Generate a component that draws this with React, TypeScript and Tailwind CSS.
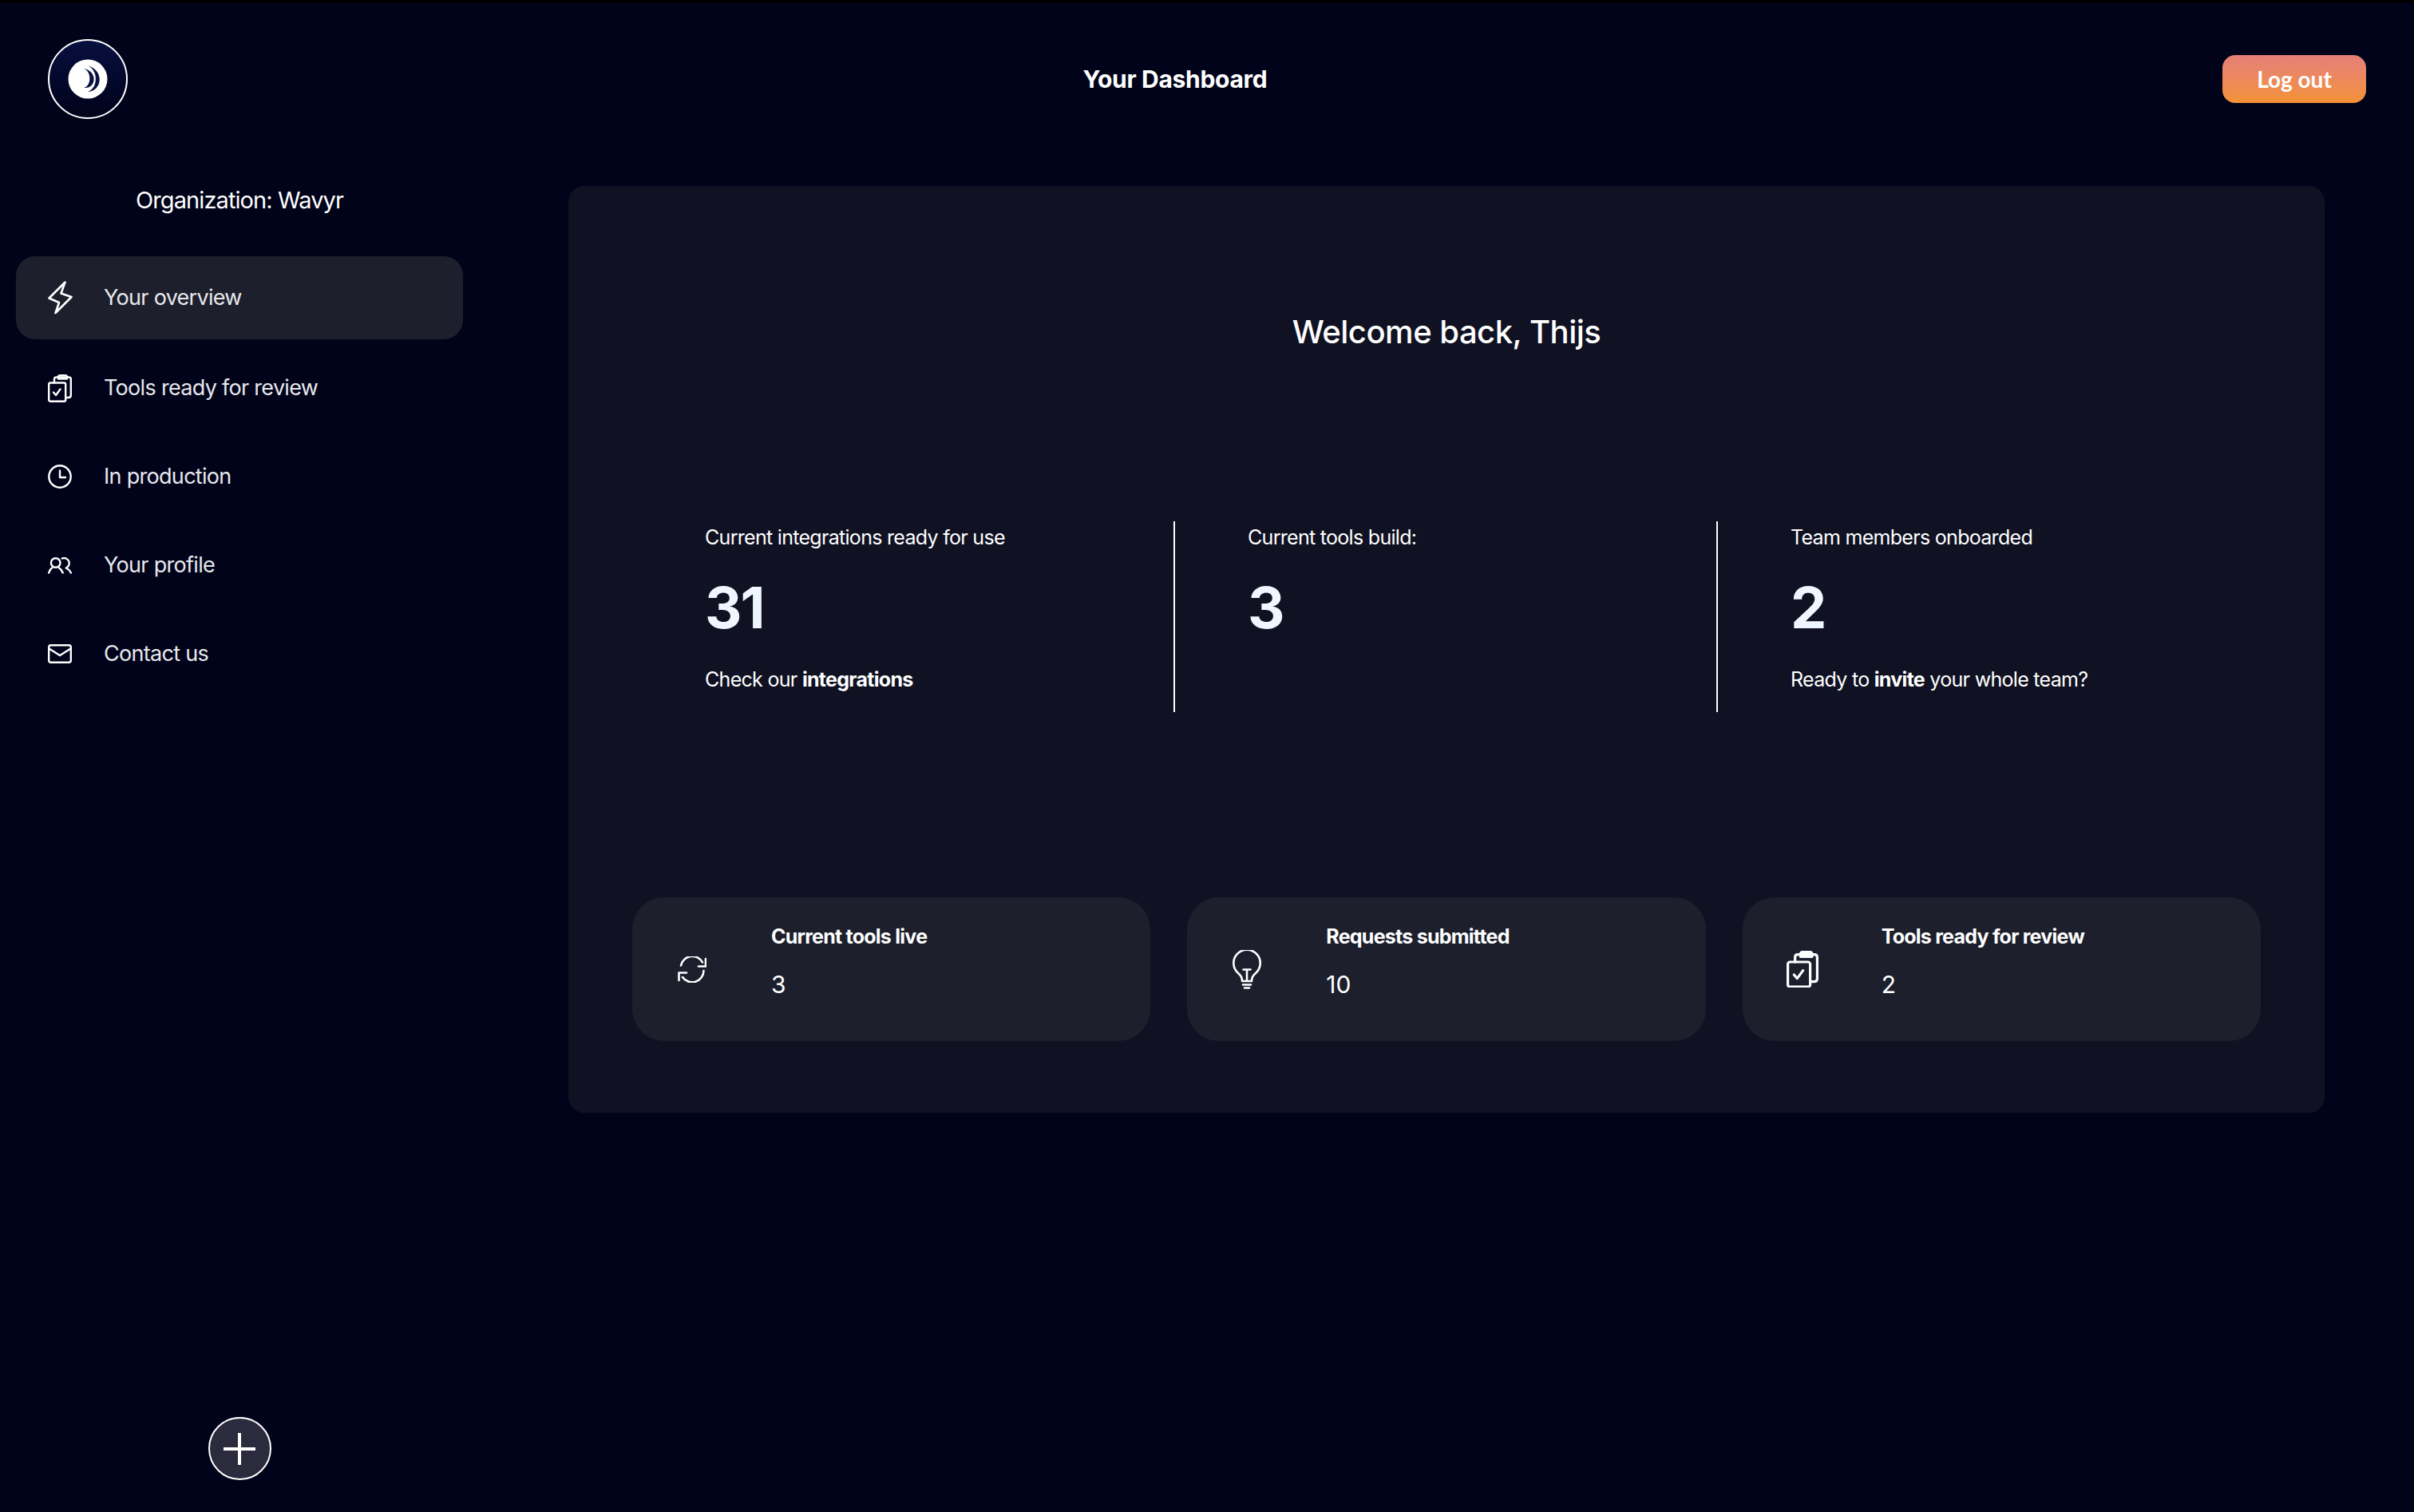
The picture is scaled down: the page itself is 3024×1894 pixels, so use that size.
import React from 'react';

const Bolt = () => (
  <svg width="31" height="42" viewBox="0 0 31 42" fill="none" stroke="white" strokeWidth="2.6" strokeLinejoin="round" strokeLinecap="round">
    <path d="M21.5 1.5 L1.5 21.5 L14 27 L9.5 40 L29.5 20 L16.5 15.5 Z" />
  </svg>
);

const Clipboards = ({ size = 30 }: { size?: number }) => (
  <svg width={size} height={(size * 35) / 30} viewBox="0 0 30 35" fill="none" stroke="white" strokeWidth="2.4" strokeLinejoin="round" strokeLinecap="round">
    <rect x="1.2" y="10.5" width="21" height="23.3" rx="2" />
    <path d="M8 10.5 V6 Q8 3.5 10.5 3.5 H26 Q28.8 3.5 28.8 6 V26 Q28.8 29 26 29 H22.2" />
    <path d="M13 3.5 Q13 1.2 15 1.2 H22 Q24 1.2 24 3.5 V5.5 H13 Z" />
    <path d="M7 22.5 L10 26 L15.5 18.5" />
  </svg>
);

const Clock = () => (
  <svg width="30" height="30" viewBox="0 0 30 30" fill="none" stroke="white" strokeWidth="2.4" strokeLinecap="round" strokeLinejoin="round">
    <circle cx="15" cy="15" r="13.7" />
    <path d="M15 7.5 V16 H22" />
  </svg>
);

const People = () => (
  <svg width="30" height="21" viewBox="0 0 30 21" fill="none" stroke="white" strokeWidth="2.4" strokeLinecap="round" strokeLinejoin="round">
    <circle cx="9.7" cy="7" r="5.8" />
    <path d="M1.2 19.5 Q2.5 15 5.5 13 M13.5 13 Q17 15 18.7 19.5" />
    <path d="M17.7 1.5 A6 6 0 0 1 22.7 13.5 Q26.5 15 28.8 19.5" />
  </svg>
);

const Mail = () => (
  <svg width="30" height="24" viewBox="0 0 30 24" fill="none" stroke="white" strokeWidth="2.4" strokeLinecap="round" strokeLinejoin="round">
    <rect x="1.2" y="1.2" width="27.6" height="21.6" rx="2.5" />
    <path d="M1.5 5.5 L15 14 L28.5 5.5" />
  </svg>
);

const Sync = () => (
  <svg width="36" height="33" viewBox="0 0 36 33" fill="none" stroke="white" strokeWidth="2.6" strokeLinecap="round" strokeLinejoin="round">
    <path d="M4 11.5 A14.5 14.5 0 0 1 31 7.5" />
    <path d="M35 3 V12.5 H26" />
    <path d="M32.5 18 A14.5 14.5 0 0 1 6 26" />
    <path d="M1.5 30 V20.5 H11" />
  </svg>
);

const Bulb = () => (
  <svg width="36" height="49" viewBox="0 0 36 49" fill="none" stroke="white" strokeWidth="2.6" strokeLinecap="round" strokeLinejoin="round">
    <path d="M12 38.5 Q12 33 7 29 A16.7 16.7 0 1 1 29 29 Q24 33 24 38.5" />
    <path d="M18 38 V24.5 M13.5 24.5 H22.5" />
    <path d="M12 39 H24 M13 43.5 H23 M15 47.5 H21" />
  </svg>
);

const Logo = () => (
  <div className="flex h-[100px] w-[100px] items-center justify-center rounded-full border-2 border-white bg-gradient-to-b from-[#08103f] to-[#01031a]">
    <svg width="50" height="50" viewBox="0 0 50 50">
      <circle cx="25" cy="25" r="24.5" fill="white" />
      <path d="M19 12 C29 13 31 33 20 36 C36 38 38 14 19 12 Z" fill="#08103f" />
      <path d="M23 8 C38 11 39 36 25 41 C44 40 46 12 23 8 Z" fill="#08103f" />
    </svg>
  </div>
);

const navItems = [
  { label: 'Your overview', icon: <Bolt />, active: true },
  { label: 'Tools ready for review', icon: <Clipboards />, active: false },
  { label: 'In production', icon: <Clock />, active: false },
  { label: 'Your profile', icon: <People />, active: false },
  { label: 'Contact us', icon: <Mail />, active: false },
];

const Stat = ({ title, value, children, divider }: { title: string; value: string; children?: React.ReactNode; divider?: boolean }) => (
  <div className={`h-[239px] pl-[91px] ${divider ? 'border-r-2 border-white' : ''}`}>
    <p className="mt-[4px] text-[25px] leading-[32px] tracking-[-0.7px] text-white">{title}</p>
    <p className="mt-[30px] text-[72px] leading-[84px] font-bold tracking-[-2px] text-[#f0f6ff]">{value}</p>
    <p className="mt-[32px] text-[25px] leading-[32px] tracking-[-0.7px] text-white">{children}</p>
  </div>
);

const Card = ({ icon, title, value }: { icon: React.ReactNode; title: string; value: string }) => (
  <div className="flex h-[180px] flex-1 items-center rounded-[40px] bg-[#1d1f2d]">
    <div className="flex w-[174px] justify-center pr-[24px]">{icon}</div>
    <div className="-mt-[21px]">
      <p className="text-[25px] leading-[32px] font-bold tracking-[-0.75px] text-white">{title}</p>
      <p className="mt-[27px] text-[30px] leading-[34px] text-white">{value}</p>
    </div>
  </div>
);

export default function App() {
  return (
    <div className="flex h-[1894px] w-[3024px] flex-col border-t-4 border-black bg-[#01031a] font-['Inter',sans-serif] text-white">
      <header className="flex items-center justify-between px-[60px] pt-[45px]">
        <Logo />
        <h1 className="text-[30px] font-bold tracking-[-0.3px]">Your Dashboard</h1>
        <button className="h-[60px] w-[180px] rounded-[16px] bg-gradient-to-b from-[#e57f78] to-[#f39233] font-['Lato',sans-serif] text-[28px] font-bold">
          Log out
        </button>
      </header>

      <div className="flex flex-1 pt-[84px]">
        <aside className="flex w-[600px] flex-col items-center pb-[40px]">
          <p className="mt-[1px] text-[29px] leading-[34px] tracking-[-0.9px]">Organization: Wavyr</p>
          <nav className="mt-[53px] flex w-[560px] flex-col gap-[7px]">
            {navItems.map((item) => (
              <a
                key={item.label}
                className={`flex h-[104px] items-center pl-[40px] text-[27px] tracking-[-0.7px] text-[#e8e8ec] ${item.active ? 'mb-[2px] rounded-[24px] bg-[#1d1f2d]' : ''}`}
              >
                <span className="flex w-[70px] shrink-0 justify-start">{item.icon}</span>
                {item.label}
              </a>
            ))}
          </nav>
          <button className="mt-auto flex h-[79px] w-[79px] items-center justify-center rounded-full border-2 border-white bg-[#2b2b3d]">
            <svg width="40" height="40" viewBox="0 0 40 40" fill="white">
              <rect x="18" y="0" width="4" height="40" />
              <rect x="0" y="18" width="40" height="4" />
            </svg>
          </button>
        </aside>

        <main className="flex-1 pr-[112px] pl-[112px]">
          <section className="rounded-[20px] bg-[#101223] px-[80px] pt-[159px] pb-[90px]">
            <h2 className="text-center text-[40px] leading-[48px] font-medium tracking-[-0.5px]">
              Welcome back, Thijs
            </h2>
            <div className="mt-[213px] grid grid-cols-3">
              <Stat title="Current integrations ready for use" value="31" divider>
                Check our <b>integrations</b>
              </Stat>
              <Stat title="Current tools build:" value="3" divider />
              <Stat title="Team members onboarded" value="2">
                Ready to <b>invite</b> your whole team?
              </Stat>
            </div>
            <div className="mt-[232px] flex gap-[46px]">
              <Card icon={<Sync />} title="Current tools live" value="3" />
              <Card icon={<Bulb />} title="Requests submitted" value="10" />
              <Card icon={<Clipboards size={40} />} title="Tools ready for review" value="2" />
            </div>
          </section>
        </main>
      </div>
    </div>
  );
}
